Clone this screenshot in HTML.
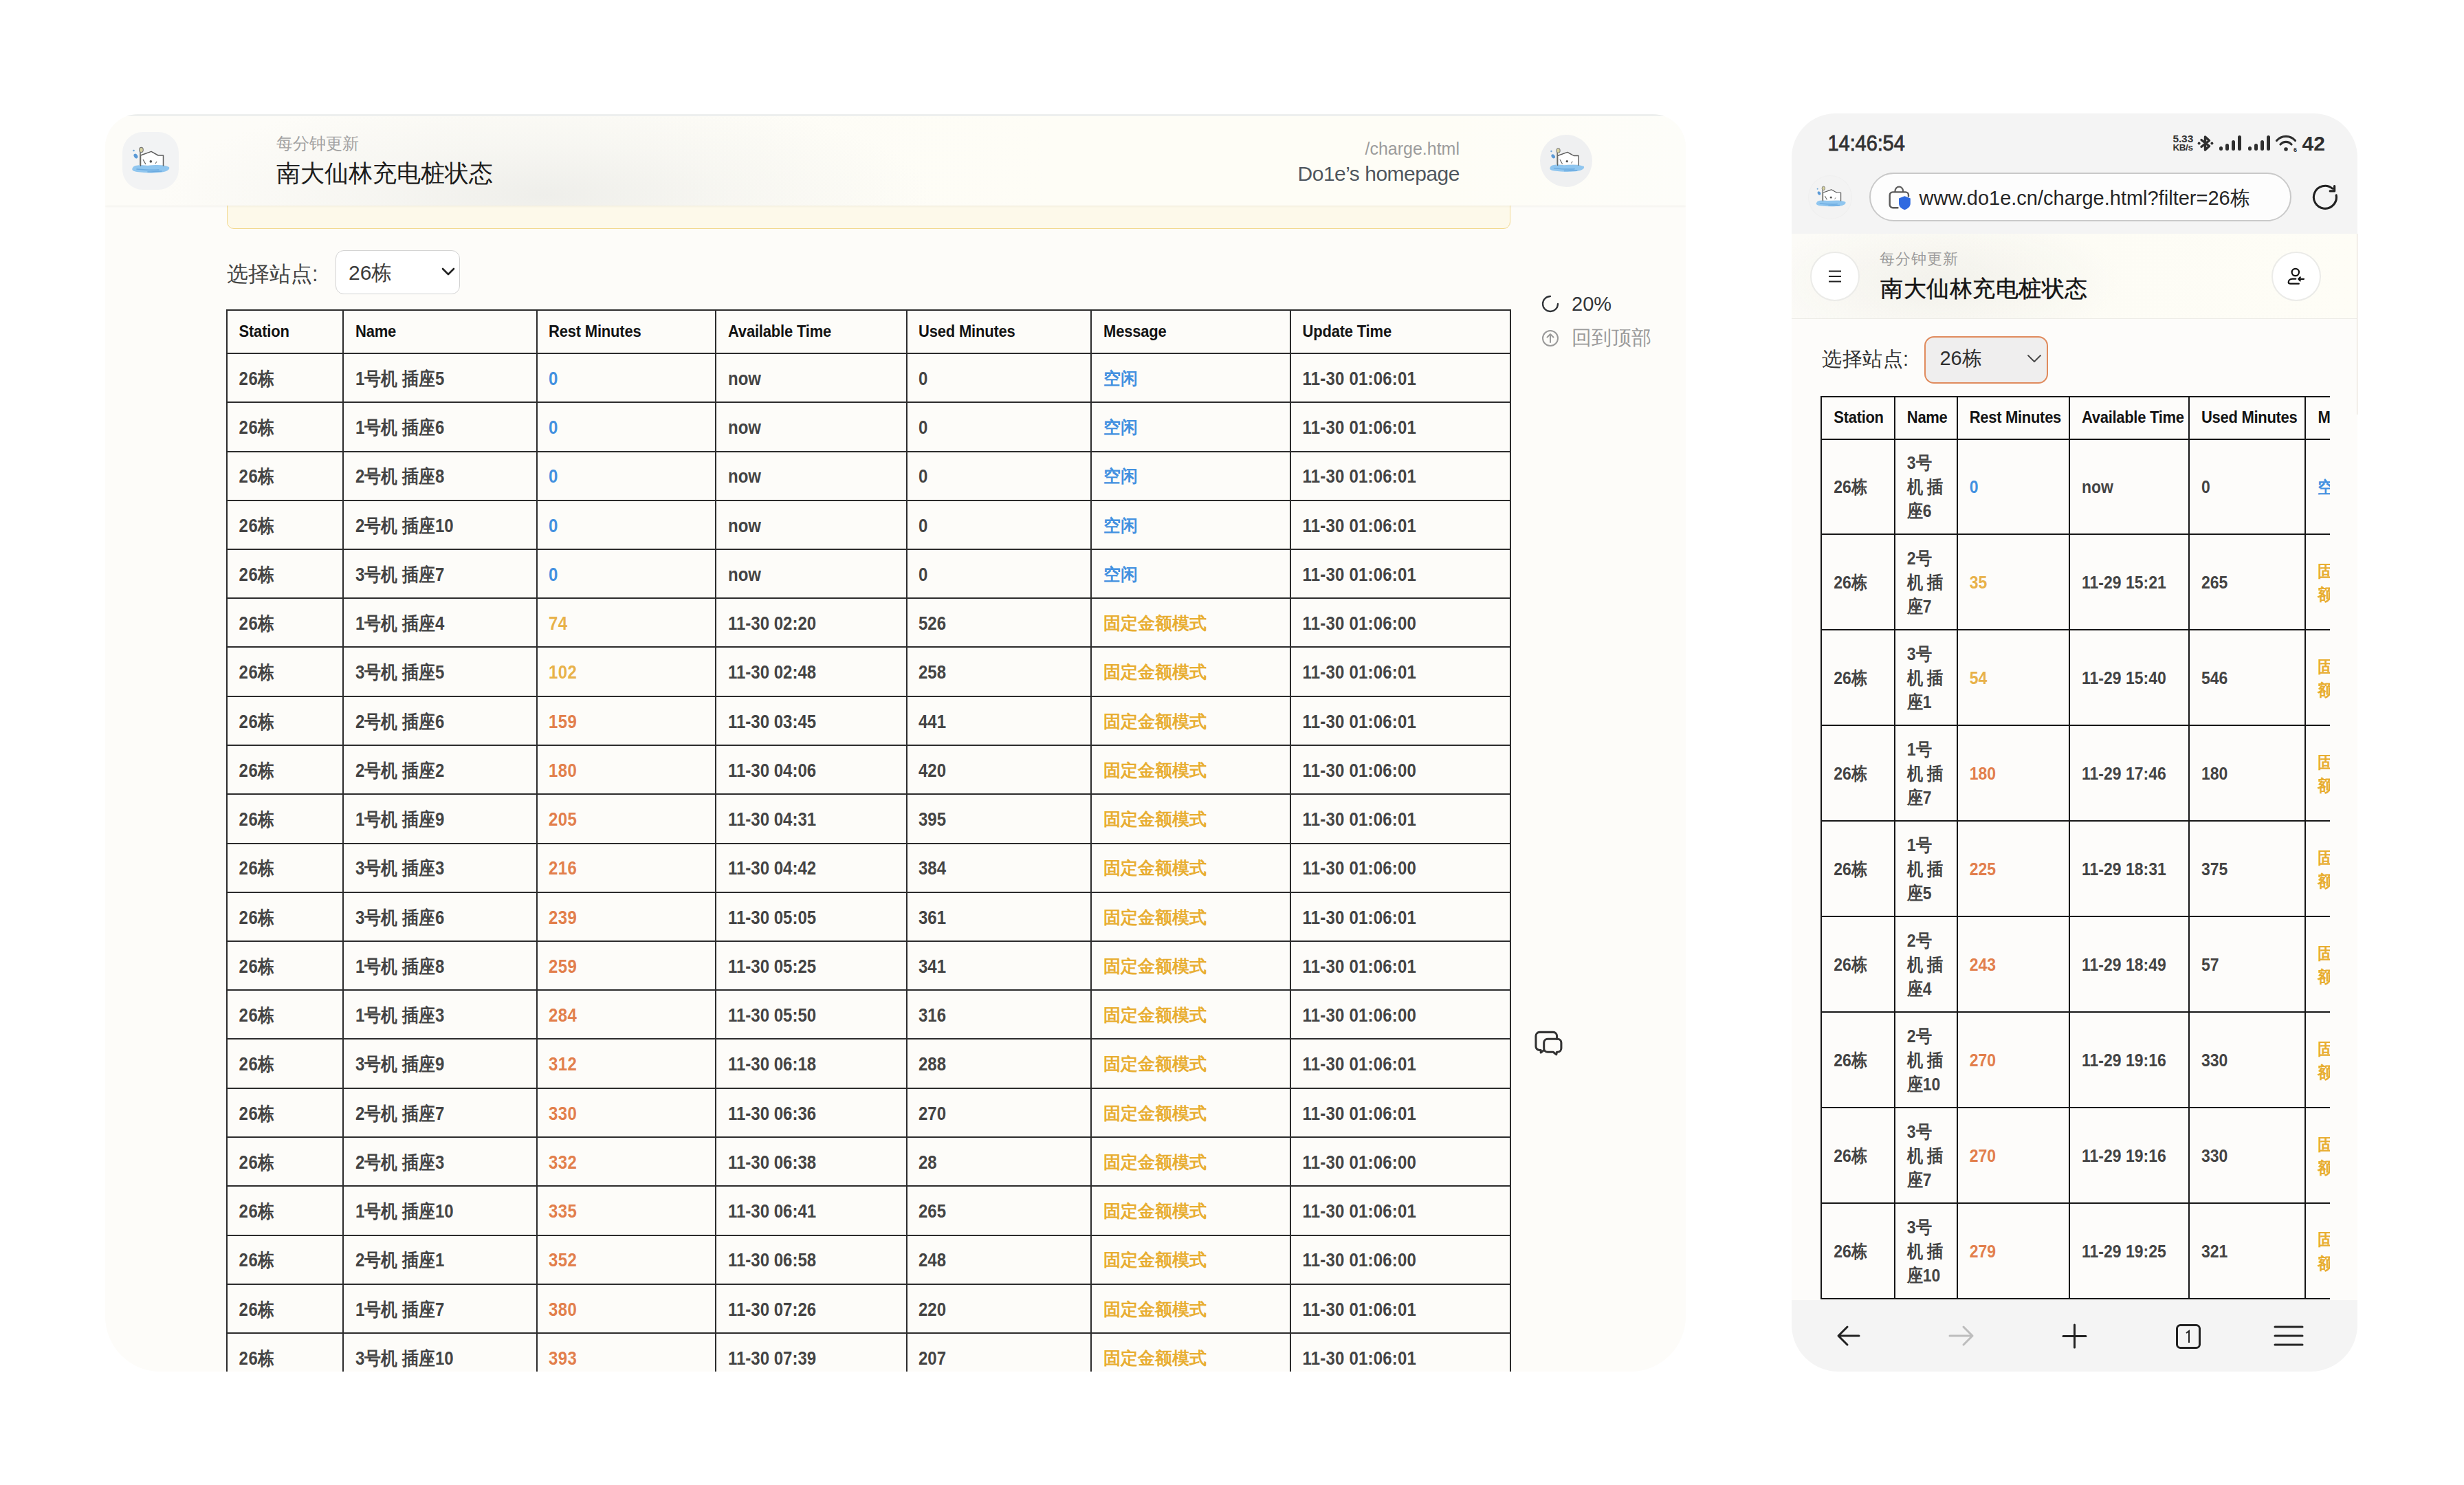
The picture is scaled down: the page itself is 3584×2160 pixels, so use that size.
<!DOCTYPE html><html><head><meta charset="utf-8"><style>
html,body{margin:0;padding:0;}
body{width:3584px;height:2160px;position:relative;overflow:hidden;background:#ffffff;font-family:"Liberation Sans", sans-serif;}
.t{position:absolute;white-space:nowrap;}
</style></head><body>
<div style="position:absolute;left:153px;top:166px;width:2299px;height:1829px;border-radius:48px 48px 80px 80px;background:#fdfcf9;overflow:hidden;"></div>
<div style="position:absolute;left:330.00px;top:260.00px;width:1867.00px;height:73.00px;box-sizing:border-box;border:1.5px solid #f2d88e;border-radius:10px;background:#fdf9ea;"></div>
<div style="position:absolute;left:153px;top:166px;width:2299px;height:140px;border-radius:48px 48px 0 0;overflow:hidden;">
<div style="position:absolute;left:0;top:0;width:2299px;height:133px;background:radial-gradient(ellipse 560px 150px at 640px 115px, rgba(236,236,232,0.85), rgba(238,238,234,0.4) 50%, rgba(238,238,234,0) 100%), linear-gradient(90deg,#fdfcf8 0%,#fdfcf7 30%,#fefdf6 60%,#fefdf6 85%,#fdfdf9 100%);border-top:3px solid #edefee;box-sizing:border-box;box-shadow:0 1px 3px rgba(120,110,80,0.10);"></div>
</div>
<div style="position:absolute;left:178.00px;top:192.00px;width:82.00px;height:84.00px;border-radius:30px;background:#f2f3f4;"></div>
<svg style="position:absolute;left:178px;top:192px" width="82" height="84" viewBox="0 0 82 84"><g transform="translate(41,40) scale(1.0)"><path d="M-26 12 C-24 7 -12 8 -4 9 C6 8 18 7 27 11 C29 15 22 19 10 19 C0 20 -10 19 -20 18 C-26 17 -28 15 -26 12 Z" fill="#90c6ef"/><path d="M-20 14 C-10 15 0 16 12 15 M-4 18 C4 18 10 17 16 17" fill="none" stroke="#6aaae0" stroke-width="1.6" stroke-linecap="round"/><path d="M-14.5 8 L-14.5 -6 L1 -11.6 L11 -6 L18.5 -6 L18.5 8 Z" fill="#ffffff"/><path d="M-14.5 9 L-14.5 -6 L1 -11.6 L11 -6 L18.5 -6 L18.5 9" fill="none" stroke="#5b5b5b" stroke-width="1.5" stroke-linejoin="round" stroke-linecap="round"/><path d="M-11 0 L-7 7" stroke="#666" stroke-width="1.3"/><circle cx="0.3" cy="2.9" r="1.8" fill="#555"/><path d="M7 6 L9 3" stroke="#777" stroke-width="1.2"/><path d="M-15 8 L-15 -12" stroke="#6d6d66" stroke-width="1.7"/><ellipse cx="-13.5" cy="-14" rx="2.8" ry="3.6" fill="#d8d3a0" stroke="#777" stroke-width="1.1"/><ellipse cx="-21.5" cy="-5" rx="2.6" ry="3.6" transform="rotate(-35 -21.5 -5)" fill="#5c9ad6"/><circle cx="-24.5" cy="-13" r="1.3" fill="#6fa7d8"/></g></svg>
<div class="t" style="left:402.00px;top:196.68px;font-size:24px;line-height:24px;color:#a3a3a3;font-weight:400;">每分钟更新</div>
<div class="t" style="left:402.00px;top:234.37px;font-size:35px;line-height:35px;color:#1c1c1c;font-weight:400;">南大仙林充电桩状态</div>
<div class="t" style="right:1461.00px;top:203.84px;font-size:25px;line-height:25px;color:#9c9c9c;font-weight:400;">/charge.html</div>
<div class="t" style="right:1461.00px;top:238.30px;font-size:30px;line-height:30px;color:#50575e;font-weight:400;letter-spacing:-0.5px;">Do1e’s homepage</div>
<div style="position:absolute;left:2240px;top:196px;width:76px;height:76px;border-radius:50%;background:#eff0f1;"></div>
<svg style="position:absolute;left:2240px;top:196px" width="76" height="76" viewBox="0 0 76 76"><g transform="translate(39,36) scale(0.92)"><path d="M-26 12 C-24 7 -12 8 -4 9 C6 8 18 7 27 11 C29 15 22 19 10 19 C0 20 -10 19 -20 18 C-26 17 -28 15 -26 12 Z" fill="#90c6ef"/><path d="M-20 14 C-10 15 0 16 12 15 M-4 18 C4 18 10 17 16 17" fill="none" stroke="#6aaae0" stroke-width="1.6" stroke-linecap="round"/><path d="M-14.5 8 L-14.5 -6 L1 -11.6 L11 -6 L18.5 -6 L18.5 8 Z" fill="#ffffff"/><path d="M-14.5 9 L-14.5 -6 L1 -11.6 L11 -6 L18.5 -6 L18.5 9" fill="none" stroke="#5b5b5b" stroke-width="1.5" stroke-linejoin="round" stroke-linecap="round"/><path d="M-11 0 L-7 7" stroke="#666" stroke-width="1.3"/><circle cx="0.3" cy="2.9" r="1.8" fill="#555"/><path d="M7 6 L9 3" stroke="#777" stroke-width="1.2"/><path d="M-15 8 L-15 -12" stroke="#6d6d66" stroke-width="1.7"/><ellipse cx="-13.5" cy="-14" rx="2.8" ry="3.6" fill="#d8d3a0" stroke="#777" stroke-width="1.1"/><ellipse cx="-21.5" cy="-5" rx="2.6" ry="3.6" transform="rotate(-35 -21.5 -5)" fill="#5c9ad6"/><circle cx="-24.5" cy="-13" r="1.3" fill="#6fa7d8"/></g></svg>
<div class="t" style="left:330.00px;top:382.76px;font-size:31px;line-height:31px;color:#444;font-weight:400;">选择站点:</div>
<div style="position:absolute;left:488.00px;top:364.00px;width:181.00px;height:64.00px;box-sizing:border-box;border:1.5px solid #d2d2d2;border-radius:12px;background:#ffffff;"></div>
<div class="t" style="left:507.00px;top:381.61px;font-size:30px;line-height:30px;color:#3c3c3c;font-weight:400;">26栋</div>
<svg style="position:absolute;left:640px;top:385px" width="24" height="20" viewBox="0 0 24 20"><path d="M4 6 L12 14 L20 6" fill="none" stroke="#222" stroke-width="2.6" stroke-linecap="round" stroke-linejoin="round"/></svg>
<svg style="position:absolute;left:2241px;top:428px" width="28" height="28" viewBox="0 0 28 28"><path d="M14 3 A11 11 0 1 0 25 14" fill="none" stroke="#2f3236" stroke-width="2.3" stroke-linecap="round"/></svg>
<div class="t" style="left:2286.00px;top:427.65px;font-size:29px;line-height:29px;color:#33363a;font-weight:400;">20%</div>
<svg style="position:absolute;left:2241px;top:478px" width="28" height="28" viewBox="0 0 28 28"><circle cx="14" cy="14" r="11" fill="none" stroke="#9a9a9a" stroke-width="2"/><path d="M14 20 V8 M9.5 12.5 L14 8 L18.5 12.5" fill="none" stroke="#9a9a9a" stroke-width="2" stroke-linecap="round" stroke-linejoin="round"/></svg>
<div class="t" style="left:2286.00px;top:477.45px;font-size:29px;line-height:29px;color:#9b9b9b;font-weight:400;">回到顶部</div>
<svg style="position:absolute;left:2229px;top:1497px" width="46" height="40" viewBox="0 0 46 40"><g transform="translate(3.2,2.6) scale(0.9)"><path d="M8 2 H30 A6 6 0 0 1 36 8 V13 M15 31 L10 35 L10 31 H8 A6 6 0 0 1 2 25 V8 A6 6 0 0 1 8 2" fill="none" stroke="#333" stroke-width="3.4" stroke-linejoin="round" stroke-linecap="round"/><path d="M21 13 H37 A6 6 0 0 1 43 19 V28 A6 6 0 0 1 37 34 H36 L35 38 L30 34 H21 A6 6 0 0 1 15 28 V19 A6 6 0 0 1 21 13 Z" fill="none" stroke="#333" stroke-width="3.4" stroke-linejoin="round"/></g></svg>
<div style="position:absolute;left:0;top:0;width:3584px;height:1995px;overflow:hidden;">
<div style="position:absolute;left:329.00px;top:450.00px;width:2.00px;height:1546.50px;background:#2c2c2c;"></div>
<div style="position:absolute;left:498.00px;top:450.00px;width:2.00px;height:1546.50px;background:#2c2c2c;"></div>
<div style="position:absolute;left:780.00px;top:450.00px;width:2.00px;height:1546.50px;background:#2c2c2c;"></div>
<div style="position:absolute;left:1040.00px;top:450.00px;width:2.00px;height:1546.50px;background:#2c2c2c;"></div>
<div style="position:absolute;left:1318.00px;top:450.00px;width:2.00px;height:1546.50px;background:#2c2c2c;"></div>
<div style="position:absolute;left:1586.00px;top:450.00px;width:2.00px;height:1546.50px;background:#2c2c2c;"></div>
<div style="position:absolute;left:1876.00px;top:450.00px;width:2.00px;height:1546.50px;background:#2c2c2c;"></div>
<div style="position:absolute;left:2196.00px;top:450.00px;width:2.00px;height:1546.50px;background:#2c2c2c;"></div>
<div style="position:absolute;left:329.00px;top:450.00px;width:1868.00px;height:2.00px;background:#2c2c2c;"></div>
<div style="position:absolute;left:329.00px;top:513.00px;width:1868.00px;height:2.00px;background:#2c2c2c;"></div>
<div style="position:absolute;left:329.00px;top:584.00px;width:1868.00px;height:2.00px;background:#2c2c2c;"></div>
<div style="position:absolute;left:329.00px;top:656.00px;width:1868.00px;height:2.00px;background:#2c2c2c;"></div>
<div style="position:absolute;left:329.00px;top:727.00px;width:1868.00px;height:2.00px;background:#2c2c2c;"></div>
<div style="position:absolute;left:329.00px;top:798.00px;width:1868.00px;height:2.00px;background:#2c2c2c;"></div>
<div style="position:absolute;left:329.00px;top:869.00px;width:1868.00px;height:2.00px;background:#2c2c2c;"></div>
<div style="position:absolute;left:329.00px;top:940.00px;width:1868.00px;height:2.00px;background:#2c2c2c;"></div>
<div style="position:absolute;left:329.00px;top:1012.00px;width:1868.00px;height:2.00px;background:#2c2c2c;"></div>
<div style="position:absolute;left:329.00px;top:1083.00px;width:1868.00px;height:2.00px;background:#2c2c2c;"></div>
<div style="position:absolute;left:329.00px;top:1154.00px;width:1868.00px;height:2.00px;background:#2c2c2c;"></div>
<div style="position:absolute;left:329.00px;top:1226.00px;width:1868.00px;height:2.00px;background:#2c2c2c;"></div>
<div style="position:absolute;left:329.00px;top:1297.00px;width:1868.00px;height:2.00px;background:#2c2c2c;"></div>
<div style="position:absolute;left:329.00px;top:1368.00px;width:1868.00px;height:2.00px;background:#2c2c2c;"></div>
<div style="position:absolute;left:329.00px;top:1439.00px;width:1868.00px;height:2.00px;background:#2c2c2c;"></div>
<div style="position:absolute;left:329.00px;top:1510.00px;width:1868.00px;height:2.00px;background:#2c2c2c;"></div>
<div style="position:absolute;left:329.00px;top:1582.00px;width:1868.00px;height:2.00px;background:#2c2c2c;"></div>
<div style="position:absolute;left:329.00px;top:1653.00px;width:1868.00px;height:2.00px;background:#2c2c2c;"></div>
<div style="position:absolute;left:329.00px;top:1724.00px;width:1868.00px;height:2.00px;background:#2c2c2c;"></div>
<div style="position:absolute;left:329.00px;top:1796.00px;width:1868.00px;height:2.00px;background:#2c2c2c;"></div>
<div style="position:absolute;left:329.00px;top:1867.00px;width:1868.00px;height:2.00px;background:#2c2c2c;"></div>
<div style="position:absolute;left:329.00px;top:1938.00px;width:1868.00px;height:2.00px;background:#2c2c2c;"></div>
<div style="position:absolute;left:329.00px;top:2009.00px;width:1868.00px;height:2.00px;background:#2c2c2c;"></div>
<div class="t" style="left:347.50px;top:471.58px;font-size:22px;line-height:22px;color:#141414;font-weight:700;letter-spacing:-0.2px;transform:scaleY(1.09);transform-origin:0 18.62px;">Station</div>
<div class="t" style="left:517.00px;top:471.58px;font-size:22px;line-height:22px;color:#141414;font-weight:700;letter-spacing:-0.2px;transform:scaleY(1.09);transform-origin:0 18.62px;">Name</div>
<div class="t" style="left:798.00px;top:471.58px;font-size:22px;line-height:22px;color:#141414;font-weight:700;letter-spacing:-0.2px;transform:scaleY(1.09);transform-origin:0 18.62px;">Rest Minutes</div>
<div class="t" style="left:1059.00px;top:471.58px;font-size:22px;line-height:22px;color:#141414;font-weight:700;letter-spacing:-0.2px;transform:scaleY(1.09);transform-origin:0 18.62px;">Available Time</div>
<div class="t" style="left:1336.00px;top:471.58px;font-size:22px;line-height:22px;color:#141414;font-weight:700;letter-spacing:-0.2px;transform:scaleY(1.09);transform-origin:0 18.62px;">Used Minutes</div>
<div class="t" style="left:1605.00px;top:471.58px;font-size:22px;line-height:22px;color:#141414;font-weight:700;letter-spacing:-0.2px;transform:scaleY(1.09);transform-origin:0 18.62px;">Message</div>
<div class="t" style="left:1894.50px;top:471.58px;font-size:22px;line-height:22px;color:#141414;font-weight:700;letter-spacing:-0.2px;transform:scaleY(1.09);transform-origin:0 18.62px;">Update Time</div>
<div class="t" style="left:347.50px;top:539.88px;font-size:24px;line-height:24px;color:#444444;font-weight:700;letter-spacing:0.6px;transform:scaleY(1.13);transform-origin:0 20.32px;">26栋</div>
<div class="t" style="left:517.00px;top:539.88px;font-size:24px;line-height:24px;color:#444444;font-weight:700;transform:scaleY(1.13);transform-origin:0 20.32px;">1号机 插座5</div>
<div class="t" style="left:798.00px;top:539.88px;font-size:24px;line-height:24px;color:#4391e0;font-weight:700;letter-spacing:0.4px;transform:scaleY(1.13);transform-origin:0 20.32px;">0</div>
<div class="t" style="left:1059.00px;top:539.88px;font-size:24px;line-height:24px;color:#444444;font-weight:700;transform:scaleY(1.13);transform-origin:0 20.32px;">now</div>
<div class="t" style="left:1336.00px;top:539.88px;font-size:24px;line-height:24px;color:#444444;font-weight:700;transform:scaleY(1.13);transform-origin:0 20.32px;">0</div>
<div class="t" style="left:1605.00px;top:537.84px;font-size:25px;line-height:25px;color:#4391e0;font-weight:700;">空闲</div>
<div class="t" style="left:1894.50px;top:539.88px;font-size:24px;line-height:24px;color:#444444;font-weight:700;letter-spacing:0.2px;transform:scaleY(1.13);transform-origin:0 20.32px;">11-30 01:06:01</div>
<div class="t" style="left:347.50px;top:611.13px;font-size:24px;line-height:24px;color:#444444;font-weight:700;letter-spacing:0.6px;transform:scaleY(1.13);transform-origin:0 20.32px;">26栋</div>
<div class="t" style="left:517.00px;top:611.13px;font-size:24px;line-height:24px;color:#444444;font-weight:700;transform:scaleY(1.13);transform-origin:0 20.32px;">1号机 插座6</div>
<div class="t" style="left:798.00px;top:611.13px;font-size:24px;line-height:24px;color:#4391e0;font-weight:700;letter-spacing:0.4px;transform:scaleY(1.13);transform-origin:0 20.32px;">0</div>
<div class="t" style="left:1059.00px;top:611.13px;font-size:24px;line-height:24px;color:#444444;font-weight:700;transform:scaleY(1.13);transform-origin:0 20.32px;">now</div>
<div class="t" style="left:1336.00px;top:611.13px;font-size:24px;line-height:24px;color:#444444;font-weight:700;transform:scaleY(1.13);transform-origin:0 20.32px;">0</div>
<div class="t" style="left:1605.00px;top:609.09px;font-size:25px;line-height:25px;color:#4391e0;font-weight:700;">空闲</div>
<div class="t" style="left:1894.50px;top:611.13px;font-size:24px;line-height:24px;color:#444444;font-weight:700;letter-spacing:0.2px;transform:scaleY(1.13);transform-origin:0 20.32px;">11-30 01:06:01</div>
<div class="t" style="left:347.50px;top:682.38px;font-size:24px;line-height:24px;color:#444444;font-weight:700;letter-spacing:0.6px;transform:scaleY(1.13);transform-origin:0 20.32px;">26栋</div>
<div class="t" style="left:517.00px;top:682.38px;font-size:24px;line-height:24px;color:#444444;font-weight:700;transform:scaleY(1.13);transform-origin:0 20.32px;">2号机 插座8</div>
<div class="t" style="left:798.00px;top:682.38px;font-size:24px;line-height:24px;color:#4391e0;font-weight:700;letter-spacing:0.4px;transform:scaleY(1.13);transform-origin:0 20.32px;">0</div>
<div class="t" style="left:1059.00px;top:682.38px;font-size:24px;line-height:24px;color:#444444;font-weight:700;transform:scaleY(1.13);transform-origin:0 20.32px;">now</div>
<div class="t" style="left:1336.00px;top:682.38px;font-size:24px;line-height:24px;color:#444444;font-weight:700;transform:scaleY(1.13);transform-origin:0 20.32px;">0</div>
<div class="t" style="left:1605.00px;top:680.34px;font-size:25px;line-height:25px;color:#4391e0;font-weight:700;">空闲</div>
<div class="t" style="left:1894.50px;top:682.38px;font-size:24px;line-height:24px;color:#444444;font-weight:700;letter-spacing:0.2px;transform:scaleY(1.13);transform-origin:0 20.32px;">11-30 01:06:01</div>
<div class="t" style="left:347.50px;top:753.63px;font-size:24px;line-height:24px;color:#444444;font-weight:700;letter-spacing:0.6px;transform:scaleY(1.13);transform-origin:0 20.32px;">26栋</div>
<div class="t" style="left:517.00px;top:753.63px;font-size:24px;line-height:24px;color:#444444;font-weight:700;transform:scaleY(1.13);transform-origin:0 20.32px;">2号机 插座10</div>
<div class="t" style="left:798.00px;top:753.63px;font-size:24px;line-height:24px;color:#4391e0;font-weight:700;letter-spacing:0.4px;transform:scaleY(1.13);transform-origin:0 20.32px;">0</div>
<div class="t" style="left:1059.00px;top:753.63px;font-size:24px;line-height:24px;color:#444444;font-weight:700;transform:scaleY(1.13);transform-origin:0 20.32px;">now</div>
<div class="t" style="left:1336.00px;top:753.63px;font-size:24px;line-height:24px;color:#444444;font-weight:700;transform:scaleY(1.13);transform-origin:0 20.32px;">0</div>
<div class="t" style="left:1605.00px;top:751.59px;font-size:25px;line-height:25px;color:#4391e0;font-weight:700;">空闲</div>
<div class="t" style="left:1894.50px;top:753.63px;font-size:24px;line-height:24px;color:#444444;font-weight:700;letter-spacing:0.2px;transform:scaleY(1.13);transform-origin:0 20.32px;">11-30 01:06:01</div>
<div class="t" style="left:347.50px;top:824.88px;font-size:24px;line-height:24px;color:#444444;font-weight:700;letter-spacing:0.6px;transform:scaleY(1.13);transform-origin:0 20.32px;">26栋</div>
<div class="t" style="left:517.00px;top:824.88px;font-size:24px;line-height:24px;color:#444444;font-weight:700;transform:scaleY(1.13);transform-origin:0 20.32px;">3号机 插座7</div>
<div class="t" style="left:798.00px;top:824.88px;font-size:24px;line-height:24px;color:#4391e0;font-weight:700;letter-spacing:0.4px;transform:scaleY(1.13);transform-origin:0 20.32px;">0</div>
<div class="t" style="left:1059.00px;top:824.88px;font-size:24px;line-height:24px;color:#444444;font-weight:700;transform:scaleY(1.13);transform-origin:0 20.32px;">now</div>
<div class="t" style="left:1336.00px;top:824.88px;font-size:24px;line-height:24px;color:#444444;font-weight:700;transform:scaleY(1.13);transform-origin:0 20.32px;">0</div>
<div class="t" style="left:1605.00px;top:822.84px;font-size:25px;line-height:25px;color:#4391e0;font-weight:700;">空闲</div>
<div class="t" style="left:1894.50px;top:824.88px;font-size:24px;line-height:24px;color:#444444;font-weight:700;letter-spacing:0.2px;transform:scaleY(1.13);transform-origin:0 20.32px;">11-30 01:06:01</div>
<div class="t" style="left:347.50px;top:896.13px;font-size:24px;line-height:24px;color:#444444;font-weight:700;letter-spacing:0.6px;transform:scaleY(1.13);transform-origin:0 20.32px;">26栋</div>
<div class="t" style="left:517.00px;top:896.13px;font-size:24px;line-height:24px;color:#444444;font-weight:700;transform:scaleY(1.13);transform-origin:0 20.32px;">1号机 插座4</div>
<div class="t" style="left:798.00px;top:896.13px;font-size:24px;line-height:24px;color:#e8b24a;font-weight:700;letter-spacing:0.4px;transform:scaleY(1.13);transform-origin:0 20.32px;">74</div>
<div class="t" style="left:1059.00px;top:896.13px;font-size:24px;line-height:24px;color:#444444;font-weight:700;transform:scaleY(1.13);transform-origin:0 20.32px;">11-30 02:20</div>
<div class="t" style="left:1336.00px;top:896.13px;font-size:24px;line-height:24px;color:#444444;font-weight:700;transform:scaleY(1.13);transform-origin:0 20.32px;">526</div>
<div class="t" style="left:1605.00px;top:894.09px;font-size:25px;line-height:25px;color:#e8ae32;font-weight:700;">固定金额模式</div>
<div class="t" style="left:1894.50px;top:896.13px;font-size:24px;line-height:24px;color:#444444;font-weight:700;letter-spacing:0.2px;transform:scaleY(1.13);transform-origin:0 20.32px;">11-30 01:06:00</div>
<div class="t" style="left:347.50px;top:967.38px;font-size:24px;line-height:24px;color:#444444;font-weight:700;letter-spacing:0.6px;transform:scaleY(1.13);transform-origin:0 20.32px;">26栋</div>
<div class="t" style="left:517.00px;top:967.38px;font-size:24px;line-height:24px;color:#444444;font-weight:700;transform:scaleY(1.13);transform-origin:0 20.32px;">3号机 插座5</div>
<div class="t" style="left:798.00px;top:967.38px;font-size:24px;line-height:24px;color:#e8b24a;font-weight:700;letter-spacing:0.4px;transform:scaleY(1.13);transform-origin:0 20.32px;">102</div>
<div class="t" style="left:1059.00px;top:967.38px;font-size:24px;line-height:24px;color:#444444;font-weight:700;transform:scaleY(1.13);transform-origin:0 20.32px;">11-30 02:48</div>
<div class="t" style="left:1336.00px;top:967.38px;font-size:24px;line-height:24px;color:#444444;font-weight:700;transform:scaleY(1.13);transform-origin:0 20.32px;">258</div>
<div class="t" style="left:1605.00px;top:965.34px;font-size:25px;line-height:25px;color:#e8ae32;font-weight:700;">固定金额模式</div>
<div class="t" style="left:1894.50px;top:967.38px;font-size:24px;line-height:24px;color:#444444;font-weight:700;letter-spacing:0.2px;transform:scaleY(1.13);transform-origin:0 20.32px;">11-30 01:06:01</div>
<div class="t" style="left:347.50px;top:1038.63px;font-size:24px;line-height:24px;color:#444444;font-weight:700;letter-spacing:0.6px;transform:scaleY(1.13);transform-origin:0 20.32px;">26栋</div>
<div class="t" style="left:517.00px;top:1038.63px;font-size:24px;line-height:24px;color:#444444;font-weight:700;transform:scaleY(1.13);transform-origin:0 20.32px;">2号机 插座6</div>
<div class="t" style="left:798.00px;top:1038.63px;font-size:24px;line-height:24px;color:#e27f4c;font-weight:700;letter-spacing:0.4px;transform:scaleY(1.13);transform-origin:0 20.32px;">159</div>
<div class="t" style="left:1059.00px;top:1038.63px;font-size:24px;line-height:24px;color:#444444;font-weight:700;transform:scaleY(1.13);transform-origin:0 20.32px;">11-30 03:45</div>
<div class="t" style="left:1336.00px;top:1038.63px;font-size:24px;line-height:24px;color:#444444;font-weight:700;transform:scaleY(1.13);transform-origin:0 20.32px;">441</div>
<div class="t" style="left:1605.00px;top:1036.59px;font-size:25px;line-height:25px;color:#e8ae32;font-weight:700;">固定金额模式</div>
<div class="t" style="left:1894.50px;top:1038.63px;font-size:24px;line-height:24px;color:#444444;font-weight:700;letter-spacing:0.2px;transform:scaleY(1.13);transform-origin:0 20.32px;">11-30 01:06:01</div>
<div class="t" style="left:347.50px;top:1109.88px;font-size:24px;line-height:24px;color:#444444;font-weight:700;letter-spacing:0.6px;transform:scaleY(1.13);transform-origin:0 20.32px;">26栋</div>
<div class="t" style="left:517.00px;top:1109.88px;font-size:24px;line-height:24px;color:#444444;font-weight:700;transform:scaleY(1.13);transform-origin:0 20.32px;">2号机 插座2</div>
<div class="t" style="left:798.00px;top:1109.88px;font-size:24px;line-height:24px;color:#e27f4c;font-weight:700;letter-spacing:0.4px;transform:scaleY(1.13);transform-origin:0 20.32px;">180</div>
<div class="t" style="left:1059.00px;top:1109.88px;font-size:24px;line-height:24px;color:#444444;font-weight:700;transform:scaleY(1.13);transform-origin:0 20.32px;">11-30 04:06</div>
<div class="t" style="left:1336.00px;top:1109.88px;font-size:24px;line-height:24px;color:#444444;font-weight:700;transform:scaleY(1.13);transform-origin:0 20.32px;">420</div>
<div class="t" style="left:1605.00px;top:1107.84px;font-size:25px;line-height:25px;color:#e8ae32;font-weight:700;">固定金额模式</div>
<div class="t" style="left:1894.50px;top:1109.88px;font-size:24px;line-height:24px;color:#444444;font-weight:700;letter-spacing:0.2px;transform:scaleY(1.13);transform-origin:0 20.32px;">11-30 01:06:00</div>
<div class="t" style="left:347.50px;top:1181.13px;font-size:24px;line-height:24px;color:#444444;font-weight:700;letter-spacing:0.6px;transform:scaleY(1.13);transform-origin:0 20.32px;">26栋</div>
<div class="t" style="left:517.00px;top:1181.13px;font-size:24px;line-height:24px;color:#444444;font-weight:700;transform:scaleY(1.13);transform-origin:0 20.32px;">1号机 插座9</div>
<div class="t" style="left:798.00px;top:1181.13px;font-size:24px;line-height:24px;color:#e27f4c;font-weight:700;letter-spacing:0.4px;transform:scaleY(1.13);transform-origin:0 20.32px;">205</div>
<div class="t" style="left:1059.00px;top:1181.13px;font-size:24px;line-height:24px;color:#444444;font-weight:700;transform:scaleY(1.13);transform-origin:0 20.32px;">11-30 04:31</div>
<div class="t" style="left:1336.00px;top:1181.13px;font-size:24px;line-height:24px;color:#444444;font-weight:700;transform:scaleY(1.13);transform-origin:0 20.32px;">395</div>
<div class="t" style="left:1605.00px;top:1179.09px;font-size:25px;line-height:25px;color:#e8ae32;font-weight:700;">固定金额模式</div>
<div class="t" style="left:1894.50px;top:1181.13px;font-size:24px;line-height:24px;color:#444444;font-weight:700;letter-spacing:0.2px;transform:scaleY(1.13);transform-origin:0 20.32px;">11-30 01:06:01</div>
<div class="t" style="left:347.50px;top:1252.38px;font-size:24px;line-height:24px;color:#444444;font-weight:700;letter-spacing:0.6px;transform:scaleY(1.13);transform-origin:0 20.32px;">26栋</div>
<div class="t" style="left:517.00px;top:1252.38px;font-size:24px;line-height:24px;color:#444444;font-weight:700;transform:scaleY(1.13);transform-origin:0 20.32px;">3号机 插座3</div>
<div class="t" style="left:798.00px;top:1252.38px;font-size:24px;line-height:24px;color:#e27f4c;font-weight:700;letter-spacing:0.4px;transform:scaleY(1.13);transform-origin:0 20.32px;">216</div>
<div class="t" style="left:1059.00px;top:1252.38px;font-size:24px;line-height:24px;color:#444444;font-weight:700;transform:scaleY(1.13);transform-origin:0 20.32px;">11-30 04:42</div>
<div class="t" style="left:1336.00px;top:1252.38px;font-size:24px;line-height:24px;color:#444444;font-weight:700;transform:scaleY(1.13);transform-origin:0 20.32px;">384</div>
<div class="t" style="left:1605.00px;top:1250.34px;font-size:25px;line-height:25px;color:#e8ae32;font-weight:700;">固定金额模式</div>
<div class="t" style="left:1894.50px;top:1252.38px;font-size:24px;line-height:24px;color:#444444;font-weight:700;letter-spacing:0.2px;transform:scaleY(1.13);transform-origin:0 20.32px;">11-30 01:06:00</div>
<div class="t" style="left:347.50px;top:1323.63px;font-size:24px;line-height:24px;color:#444444;font-weight:700;letter-spacing:0.6px;transform:scaleY(1.13);transform-origin:0 20.32px;">26栋</div>
<div class="t" style="left:517.00px;top:1323.63px;font-size:24px;line-height:24px;color:#444444;font-weight:700;transform:scaleY(1.13);transform-origin:0 20.32px;">3号机 插座6</div>
<div class="t" style="left:798.00px;top:1323.63px;font-size:24px;line-height:24px;color:#e27f4c;font-weight:700;letter-spacing:0.4px;transform:scaleY(1.13);transform-origin:0 20.32px;">239</div>
<div class="t" style="left:1059.00px;top:1323.63px;font-size:24px;line-height:24px;color:#444444;font-weight:700;transform:scaleY(1.13);transform-origin:0 20.32px;">11-30 05:05</div>
<div class="t" style="left:1336.00px;top:1323.63px;font-size:24px;line-height:24px;color:#444444;font-weight:700;transform:scaleY(1.13);transform-origin:0 20.32px;">361</div>
<div class="t" style="left:1605.00px;top:1321.59px;font-size:25px;line-height:25px;color:#e8ae32;font-weight:700;">固定金额模式</div>
<div class="t" style="left:1894.50px;top:1323.63px;font-size:24px;line-height:24px;color:#444444;font-weight:700;letter-spacing:0.2px;transform:scaleY(1.13);transform-origin:0 20.32px;">11-30 01:06:01</div>
<div class="t" style="left:347.50px;top:1394.88px;font-size:24px;line-height:24px;color:#444444;font-weight:700;letter-spacing:0.6px;transform:scaleY(1.13);transform-origin:0 20.32px;">26栋</div>
<div class="t" style="left:517.00px;top:1394.88px;font-size:24px;line-height:24px;color:#444444;font-weight:700;transform:scaleY(1.13);transform-origin:0 20.32px;">1号机 插座8</div>
<div class="t" style="left:798.00px;top:1394.88px;font-size:24px;line-height:24px;color:#e27f4c;font-weight:700;letter-spacing:0.4px;transform:scaleY(1.13);transform-origin:0 20.32px;">259</div>
<div class="t" style="left:1059.00px;top:1394.88px;font-size:24px;line-height:24px;color:#444444;font-weight:700;transform:scaleY(1.13);transform-origin:0 20.32px;">11-30 05:25</div>
<div class="t" style="left:1336.00px;top:1394.88px;font-size:24px;line-height:24px;color:#444444;font-weight:700;transform:scaleY(1.13);transform-origin:0 20.32px;">341</div>
<div class="t" style="left:1605.00px;top:1392.84px;font-size:25px;line-height:25px;color:#e8ae32;font-weight:700;">固定金额模式</div>
<div class="t" style="left:1894.50px;top:1394.88px;font-size:24px;line-height:24px;color:#444444;font-weight:700;letter-spacing:0.2px;transform:scaleY(1.13);transform-origin:0 20.32px;">11-30 01:06:01</div>
<div class="t" style="left:347.50px;top:1466.13px;font-size:24px;line-height:24px;color:#444444;font-weight:700;letter-spacing:0.6px;transform:scaleY(1.13);transform-origin:0 20.32px;">26栋</div>
<div class="t" style="left:517.00px;top:1466.13px;font-size:24px;line-height:24px;color:#444444;font-weight:700;transform:scaleY(1.13);transform-origin:0 20.32px;">1号机 插座3</div>
<div class="t" style="left:798.00px;top:1466.13px;font-size:24px;line-height:24px;color:#e27f4c;font-weight:700;letter-spacing:0.4px;transform:scaleY(1.13);transform-origin:0 20.32px;">284</div>
<div class="t" style="left:1059.00px;top:1466.13px;font-size:24px;line-height:24px;color:#444444;font-weight:700;transform:scaleY(1.13);transform-origin:0 20.32px;">11-30 05:50</div>
<div class="t" style="left:1336.00px;top:1466.13px;font-size:24px;line-height:24px;color:#444444;font-weight:700;transform:scaleY(1.13);transform-origin:0 20.32px;">316</div>
<div class="t" style="left:1605.00px;top:1464.09px;font-size:25px;line-height:25px;color:#e8ae32;font-weight:700;">固定金额模式</div>
<div class="t" style="left:1894.50px;top:1466.13px;font-size:24px;line-height:24px;color:#444444;font-weight:700;letter-spacing:0.2px;transform:scaleY(1.13);transform-origin:0 20.32px;">11-30 01:06:00</div>
<div class="t" style="left:347.50px;top:1537.38px;font-size:24px;line-height:24px;color:#444444;font-weight:700;letter-spacing:0.6px;transform:scaleY(1.13);transform-origin:0 20.32px;">26栋</div>
<div class="t" style="left:517.00px;top:1537.38px;font-size:24px;line-height:24px;color:#444444;font-weight:700;transform:scaleY(1.13);transform-origin:0 20.32px;">3号机 插座9</div>
<div class="t" style="left:798.00px;top:1537.38px;font-size:24px;line-height:24px;color:#e27f4c;font-weight:700;letter-spacing:0.4px;transform:scaleY(1.13);transform-origin:0 20.32px;">312</div>
<div class="t" style="left:1059.00px;top:1537.38px;font-size:24px;line-height:24px;color:#444444;font-weight:700;transform:scaleY(1.13);transform-origin:0 20.32px;">11-30 06:18</div>
<div class="t" style="left:1336.00px;top:1537.38px;font-size:24px;line-height:24px;color:#444444;font-weight:700;transform:scaleY(1.13);transform-origin:0 20.32px;">288</div>
<div class="t" style="left:1605.00px;top:1535.34px;font-size:25px;line-height:25px;color:#e8ae32;font-weight:700;">固定金额模式</div>
<div class="t" style="left:1894.50px;top:1537.38px;font-size:24px;line-height:24px;color:#444444;font-weight:700;letter-spacing:0.2px;transform:scaleY(1.13);transform-origin:0 20.32px;">11-30 01:06:01</div>
<div class="t" style="left:347.50px;top:1608.63px;font-size:24px;line-height:24px;color:#444444;font-weight:700;letter-spacing:0.6px;transform:scaleY(1.13);transform-origin:0 20.32px;">26栋</div>
<div class="t" style="left:517.00px;top:1608.63px;font-size:24px;line-height:24px;color:#444444;font-weight:700;transform:scaleY(1.13);transform-origin:0 20.32px;">2号机 插座7</div>
<div class="t" style="left:798.00px;top:1608.63px;font-size:24px;line-height:24px;color:#e27f4c;font-weight:700;letter-spacing:0.4px;transform:scaleY(1.13);transform-origin:0 20.32px;">330</div>
<div class="t" style="left:1059.00px;top:1608.63px;font-size:24px;line-height:24px;color:#444444;font-weight:700;transform:scaleY(1.13);transform-origin:0 20.32px;">11-30 06:36</div>
<div class="t" style="left:1336.00px;top:1608.63px;font-size:24px;line-height:24px;color:#444444;font-weight:700;transform:scaleY(1.13);transform-origin:0 20.32px;">270</div>
<div class="t" style="left:1605.00px;top:1606.59px;font-size:25px;line-height:25px;color:#e8ae32;font-weight:700;">固定金额模式</div>
<div class="t" style="left:1894.50px;top:1608.63px;font-size:24px;line-height:24px;color:#444444;font-weight:700;letter-spacing:0.2px;transform:scaleY(1.13);transform-origin:0 20.32px;">11-30 01:06:01</div>
<div class="t" style="left:347.50px;top:1679.88px;font-size:24px;line-height:24px;color:#444444;font-weight:700;letter-spacing:0.6px;transform:scaleY(1.13);transform-origin:0 20.32px;">26栋</div>
<div class="t" style="left:517.00px;top:1679.88px;font-size:24px;line-height:24px;color:#444444;font-weight:700;transform:scaleY(1.13);transform-origin:0 20.32px;">2号机 插座3</div>
<div class="t" style="left:798.00px;top:1679.88px;font-size:24px;line-height:24px;color:#e27f4c;font-weight:700;letter-spacing:0.4px;transform:scaleY(1.13);transform-origin:0 20.32px;">332</div>
<div class="t" style="left:1059.00px;top:1679.88px;font-size:24px;line-height:24px;color:#444444;font-weight:700;transform:scaleY(1.13);transform-origin:0 20.32px;">11-30 06:38</div>
<div class="t" style="left:1336.00px;top:1679.88px;font-size:24px;line-height:24px;color:#444444;font-weight:700;transform:scaleY(1.13);transform-origin:0 20.32px;">28</div>
<div class="t" style="left:1605.00px;top:1677.84px;font-size:25px;line-height:25px;color:#e8ae32;font-weight:700;">固定金额模式</div>
<div class="t" style="left:1894.50px;top:1679.88px;font-size:24px;line-height:24px;color:#444444;font-weight:700;letter-spacing:0.2px;transform:scaleY(1.13);transform-origin:0 20.32px;">11-30 01:06:00</div>
<div class="t" style="left:347.50px;top:1751.13px;font-size:24px;line-height:24px;color:#444444;font-weight:700;letter-spacing:0.6px;transform:scaleY(1.13);transform-origin:0 20.32px;">26栋</div>
<div class="t" style="left:517.00px;top:1751.13px;font-size:24px;line-height:24px;color:#444444;font-weight:700;transform:scaleY(1.13);transform-origin:0 20.32px;">1号机 插座10</div>
<div class="t" style="left:798.00px;top:1751.13px;font-size:24px;line-height:24px;color:#e27f4c;font-weight:700;letter-spacing:0.4px;transform:scaleY(1.13);transform-origin:0 20.32px;">335</div>
<div class="t" style="left:1059.00px;top:1751.13px;font-size:24px;line-height:24px;color:#444444;font-weight:700;transform:scaleY(1.13);transform-origin:0 20.32px;">11-30 06:41</div>
<div class="t" style="left:1336.00px;top:1751.13px;font-size:24px;line-height:24px;color:#444444;font-weight:700;transform:scaleY(1.13);transform-origin:0 20.32px;">265</div>
<div class="t" style="left:1605.00px;top:1749.09px;font-size:25px;line-height:25px;color:#e8ae32;font-weight:700;">固定金额模式</div>
<div class="t" style="left:1894.50px;top:1751.13px;font-size:24px;line-height:24px;color:#444444;font-weight:700;letter-spacing:0.2px;transform:scaleY(1.13);transform-origin:0 20.32px;">11-30 01:06:01</div>
<div class="t" style="left:347.50px;top:1822.38px;font-size:24px;line-height:24px;color:#444444;font-weight:700;letter-spacing:0.6px;transform:scaleY(1.13);transform-origin:0 20.32px;">26栋</div>
<div class="t" style="left:517.00px;top:1822.38px;font-size:24px;line-height:24px;color:#444444;font-weight:700;transform:scaleY(1.13);transform-origin:0 20.32px;">2号机 插座1</div>
<div class="t" style="left:798.00px;top:1822.38px;font-size:24px;line-height:24px;color:#e27f4c;font-weight:700;letter-spacing:0.4px;transform:scaleY(1.13);transform-origin:0 20.32px;">352</div>
<div class="t" style="left:1059.00px;top:1822.38px;font-size:24px;line-height:24px;color:#444444;font-weight:700;transform:scaleY(1.13);transform-origin:0 20.32px;">11-30 06:58</div>
<div class="t" style="left:1336.00px;top:1822.38px;font-size:24px;line-height:24px;color:#444444;font-weight:700;transform:scaleY(1.13);transform-origin:0 20.32px;">248</div>
<div class="t" style="left:1605.00px;top:1820.34px;font-size:25px;line-height:25px;color:#e8ae32;font-weight:700;">固定金额模式</div>
<div class="t" style="left:1894.50px;top:1822.38px;font-size:24px;line-height:24px;color:#444444;font-weight:700;letter-spacing:0.2px;transform:scaleY(1.13);transform-origin:0 20.32px;">11-30 01:06:00</div>
<div class="t" style="left:347.50px;top:1893.63px;font-size:24px;line-height:24px;color:#444444;font-weight:700;letter-spacing:0.6px;transform:scaleY(1.13);transform-origin:0 20.32px;">26栋</div>
<div class="t" style="left:517.00px;top:1893.63px;font-size:24px;line-height:24px;color:#444444;font-weight:700;transform:scaleY(1.13);transform-origin:0 20.32px;">1号机 插座7</div>
<div class="t" style="left:798.00px;top:1893.63px;font-size:24px;line-height:24px;color:#e27f4c;font-weight:700;letter-spacing:0.4px;transform:scaleY(1.13);transform-origin:0 20.32px;">380</div>
<div class="t" style="left:1059.00px;top:1893.63px;font-size:24px;line-height:24px;color:#444444;font-weight:700;transform:scaleY(1.13);transform-origin:0 20.32px;">11-30 07:26</div>
<div class="t" style="left:1336.00px;top:1893.63px;font-size:24px;line-height:24px;color:#444444;font-weight:700;transform:scaleY(1.13);transform-origin:0 20.32px;">220</div>
<div class="t" style="left:1605.00px;top:1891.59px;font-size:25px;line-height:25px;color:#e8ae32;font-weight:700;">固定金额模式</div>
<div class="t" style="left:1894.50px;top:1893.63px;font-size:24px;line-height:24px;color:#444444;font-weight:700;letter-spacing:0.2px;transform:scaleY(1.13);transform-origin:0 20.32px;">11-30 01:06:01</div>
<div class="t" style="left:347.50px;top:1964.88px;font-size:24px;line-height:24px;color:#444444;font-weight:700;letter-spacing:0.6px;transform:scaleY(1.13);transform-origin:0 20.32px;">26栋</div>
<div class="t" style="left:517.00px;top:1964.88px;font-size:24px;line-height:24px;color:#444444;font-weight:700;transform:scaleY(1.13);transform-origin:0 20.32px;">3号机 插座10</div>
<div class="t" style="left:798.00px;top:1964.88px;font-size:24px;line-height:24px;color:#e27f4c;font-weight:700;letter-spacing:0.4px;transform:scaleY(1.13);transform-origin:0 20.32px;">393</div>
<div class="t" style="left:1059.00px;top:1964.88px;font-size:24px;line-height:24px;color:#444444;font-weight:700;transform:scaleY(1.13);transform-origin:0 20.32px;">11-30 07:39</div>
<div class="t" style="left:1336.00px;top:1964.88px;font-size:24px;line-height:24px;color:#444444;font-weight:700;transform:scaleY(1.13);transform-origin:0 20.32px;">207</div>
<div class="t" style="left:1605.00px;top:1962.84px;font-size:25px;line-height:25px;color:#e8ae32;font-weight:700;">固定金额模式</div>
<div class="t" style="left:1894.50px;top:1964.88px;font-size:24px;line-height:24px;color:#444444;font-weight:700;letter-spacing:0.2px;transform:scaleY(1.13);transform-origin:0 20.32px;">11-30 01:06:01</div>
</div>
<div style="position:absolute;left:2606px;top:165px;width:823px;height:1830px;border-radius:64px 64px 68px 68px;background:#f4f4f4;overflow:hidden;">
<div style="position:absolute;left:0;top:174.60000000000002px;width:823px;height:1551.1px;background:#fdfcfa;"></div>
<div style="position:absolute;left:0;top:174.60000000000002px;width:823px;height:124.39999999999998px;background:radial-gradient(ellipse 260px 100px at 220px 70px, rgba(238,237,231,0.7), rgba(240,239,233,0)), linear-gradient(90deg,#fcfbf7,#fdfcf5 50%,#fefdf6);border-bottom:1.5px solid #ecebe6;box-sizing:border-box;"></div>
</div>
<div style="position:absolute;left:3427.50px;top:339.60px;width:1.50px;height:263.00px;background:#e0d8cc;"></div>
<div class="t" style="left:2658.60px;top:195.05px;font-size:29px;line-height:29px;color:#333333;font-weight:400;letter-spacing:-0.1px;-webkit-text-stroke:0.8px #333;transform:scaleY(1.07);transform-origin:0 24.55px;">14:46:54</div>
<div class="t" style="left:3160.40px;top:194.48px;font-size:15.5px;line-height:15.5px;color:#333;font-weight:700;letter-spacing:-0.1px;">5.33</div>
<div class="t" style="left:3160.40px;top:208.17px;font-size:13.5px;line-height:13.5px;color:#333;font-weight:700;letter-spacing:-0.4px;">KB/s</div>
<svg style="position:absolute;left:3196px;top:196px" width="24" height="26" viewBox="0 0 24 26"><path d="M6 7.5 L17.5 16.5 L11.5 22 V3 L17.5 8.5 L6 17.5" fill="none" stroke="#2e2e2e" stroke-width="3.4" stroke-linejoin="round" stroke-linecap="round"/><circle cx="2.6" cy="12.5" r="2" fill="#2e2e2e"/><circle cx="21.4" cy="12.5" r="2" fill="#2e2e2e"/></svg>
<svg style="position:absolute;left:3227px;top:196px" width="34" height="24" viewBox="0 0 34 24"><rect x="1" y="17" width="5" height="6" rx="2.5" fill="#2e2e2e"/><rect x="10" y="13" width="5" height="10" rx="2.5" fill="#2e2e2e"/><rect x="19" y="8" width="5" height="15" rx="2.5" fill="#2e2e2e"/><rect x="28" y="1" width="5" height="22" rx="2.5" fill="#2e2e2e"/></svg>
<svg style="position:absolute;left:3269px;top:196px" width="34" height="24" viewBox="0 0 34 24"><rect x="1" y="17" width="5" height="6" rx="2.5" fill="#2e2e2e"/><rect x="10" y="13" width="5" height="10" rx="2.5" fill="#2e2e2e"/><rect x="19" y="8" width="5" height="15" rx="2.5" fill="#2e2e2e"/><rect x="28" y="1" width="5" height="22" rx="2.5" fill="#2e2e2e"/></svg>
<svg style="position:absolute;left:3309px;top:196px" width="36" height="26" viewBox="0 0 36 26"><path d="M2.5 8.5 A18 18 0 0 1 29.5 8.5" fill="none" stroke="#2e2e2e" stroke-width="3.2" stroke-linecap="round"/><path d="M8 14 A10.5 10.5 0 0 1 24 14" fill="none" stroke="#2e2e2e" stroke-width="3.2" stroke-linecap="round"/><circle cx="16" cy="21" r="2.8" fill="#2e2e2e"/><text x="27" y="25" font-size="9" font-weight="700" fill="#2e2e2e" font-family="Liberation Sans">6</text></svg>
<div class="t" style="left:3348.60px;top:194.20px;font-size:30px;line-height:30px;color:#2e2e2e;font-weight:700;">42</div>
<div style="position:absolute;left:2631px;top:256px;width:62px;height:62px;border-radius:50%;background:#f3f3f3;box-shadow:0 0 0 1px #efefef;"></div>
<svg style="position:absolute;left:2631px;top:256px" width="62" height="62" viewBox="0 0 62 62"><g transform="translate(32,29) scale(0.79)"><path d="M-26 12 C-24 7 -12 8 -4 9 C6 8 18 7 27 11 C29 15 22 19 10 19 C0 20 -10 19 -20 18 C-26 17 -28 15 -26 12 Z" fill="#90c6ef"/><path d="M-20 14 C-10 15 0 16 12 15 M-4 18 C4 18 10 17 16 17" fill="none" stroke="#6aaae0" stroke-width="1.6" stroke-linecap="round"/><path d="M-14.5 8 L-14.5 -6 L1 -11.6 L11 -6 L18.5 -6 L18.5 8 Z" fill="#ffffff"/><path d="M-14.5 9 L-14.5 -6 L1 -11.6 L11 -6 L18.5 -6 L18.5 9" fill="none" stroke="#5b5b5b" stroke-width="1.5" stroke-linejoin="round" stroke-linecap="round"/><path d="M-11 0 L-7 7" stroke="#666" stroke-width="1.3"/><circle cx="0.3" cy="2.9" r="1.8" fill="#555"/><path d="M7 6 L9 3" stroke="#777" stroke-width="1.2"/><path d="M-15 8 L-15 -12" stroke="#6d6d66" stroke-width="1.7"/><ellipse cx="-13.5" cy="-14" rx="2.8" ry="3.6" fill="#d8d3a0" stroke="#777" stroke-width="1.1"/><ellipse cx="-21.5" cy="-5" rx="2.6" ry="3.6" transform="rotate(-35 -21.5 -5)" fill="#5c9ad6"/><circle cx="-24.5" cy="-13" r="1.3" fill="#6fa7d8"/></g></svg>
<div style="position:absolute;left:2718.70px;top:251.30px;width:614.30px;height:71.00px;box-sizing:border-box;border:2px solid #c9c9c9;border-radius:36px;background:#fdfdfd;"></div>
<svg style="position:absolute;left:2746px;top:268px" width="36" height="40" viewBox="0 0 36 40"><path d="M10.5 11.4 V9.8 A5.8 6.2 0 0 1 22.1 9.8 V11.4" fill="none" stroke="#5f5f5f" stroke-width="2.3"/><path d="M14.5 34.2 H7.2 A4.5 4.5 0 0 1 2.7 29.7 V15.9 A4.5 4.5 0 0 1 7.2 11.4 H25.5 A4.5 4.5 0 0 1 30 15.9 V17.5" fill="none" stroke="#5a5a5a" stroke-width="2.4" stroke-linejoin="round" stroke-linecap="round"/><path d="M24.4 17.2 L32.8 20.6 V28 C32.8 32.4 29 35.6 24.4 37.2 C19.8 35.6 16 32.4 16 28 V20.6 Z" fill="#2f6ae0"/></svg>
<div class="t" style="left:2791.50px;top:274.05px;font-size:29px;line-height:29px;color:#262626;font-weight:400;">www.do1e.cn/charge.html?filter=26栋</div>
<svg style="position:absolute;left:3362px;top:266px" width="40" height="40" viewBox="0 0 40 40"><path d="M36.15 17.93 A16.5 16.5 0 1 1 30.5 8.16" fill="none" stroke="#222" stroke-width="3.1" stroke-linecap="round"/><path d="M33.6 4.6 V11.9 H27.2" fill="none" stroke="#222" stroke-width="3.2" stroke-linecap="round" stroke-linejoin="round"/></svg>
<div style="position:absolute;left:2633px;top:366px;width:72px;height:72px;border-radius:50%;background:#ffffff;box-sizing:border-box;border:2px solid #ebebe8;"></div>
<svg style="position:absolute;left:2657px;top:391px" width="24" height="22" viewBox="0 0 24 22"><path d="M3 3.5 H21 M3 11 H21 M3 18.5 H21" stroke="#222" stroke-width="2.2"/></svg>
<div style="position:absolute;left:3304px;top:366px;width:72px;height:72px;border-radius:50%;background:#ffffff;box-sizing:border-box;border:2px solid #ebebe8;"></div>
<svg style="position:absolute;left:3326px;top:388px" width="30" height="30" viewBox="0 0 30 30"><circle cx="12.8" cy="8" r="5.2" fill="none" stroke="#111" stroke-width="2.2"/><path d="M13.3 17.7 H8.5 C5 17.7 2.7 20 2.7 22.5 C2.7 24 3.8 24.7 5.5 24.7 H17.8" fill="none" stroke="#111" stroke-width="2.2" stroke-linecap="round"/><path d="M17.5 17.8 H25 M19.8 15.2 L17.3 17.8 L19.8 20.4" fill="none" stroke="#111" stroke-width="2.2" stroke-linecap="round" stroke-linejoin="round"/></svg>
<div class="t" style="left:2734.00px;top:366.38px;font-size:22px;line-height:22px;color:#9c9c9c;font-weight:400;letter-spacing:1px;">每分钟更新</div>
<div class="t" style="left:2735.00px;top:403.07px;font-size:33px;line-height:33px;color:#141414;font-weight:400;letter-spacing:0.5px;-webkit-text-stroke:0.45px #141414;">南大仙林充电桩状态</div>
<div class="t" style="left:2650.00px;top:508.45px;font-size:29px;line-height:29px;color:#333;font-weight:400;letter-spacing:0.5px;">选择站点:</div>
<div style="position:absolute;left:2799.00px;top:489.00px;width:179.60px;height:68.70px;box-sizing:border-box;border:2.5px solid #e08b5d;border-radius:14px;background:#efeeee;"></div>
<div class="t" style="left:2821.40px;top:507.45px;font-size:29px;line-height:29px;color:#2e2e2e;font-weight:400;">26栋</div>
<svg style="position:absolute;left:2946px;top:512px" width="26" height="20" viewBox="0 0 26 20"><path d="M4 5 L13 14 L22 5" fill="none" stroke="#444" stroke-width="1.8" stroke-linecap="round" stroke-linejoin="round"/></svg>
<div style="position:absolute;left:0;top:0;width:3389.3px;height:1890px;overflow:hidden;">
<div style="position:absolute;left:2648.00px;top:576.00px;width:2.00px;height:1315.00px;background:#161616;"></div>
<div style="position:absolute;left:2755.00px;top:576.00px;width:2.00px;height:1315.00px;background:#161616;"></div>
<div style="position:absolute;left:2846.00px;top:576.00px;width:2.00px;height:1315.00px;background:#161616;"></div>
<div style="position:absolute;left:3009.00px;top:576.00px;width:2.00px;height:1315.00px;background:#161616;"></div>
<div style="position:absolute;left:3183.00px;top:576.00px;width:2.00px;height:1315.00px;background:#161616;"></div>
<div style="position:absolute;left:3352.00px;top:576.00px;width:2.00px;height:1315.00px;background:#161616;"></div>
<div style="position:absolute;left:2648.00px;top:576.00px;width:742.00px;height:2.00px;background:#161616;"></div>
<div style="position:absolute;left:2648.00px;top:638.00px;width:742.00px;height:2.00px;background:#161616;"></div>
<div style="position:absolute;left:2648.00px;top:776.00px;width:742.00px;height:2.00px;background:#161616;"></div>
<div style="position:absolute;left:2648.00px;top:915.00px;width:742.00px;height:2.00px;background:#161616;"></div>
<div style="position:absolute;left:2648.00px;top:1054.00px;width:742.00px;height:2.00px;background:#161616;"></div>
<div style="position:absolute;left:2648.00px;top:1193.00px;width:742.00px;height:2.00px;background:#161616;"></div>
<div style="position:absolute;left:2648.00px;top:1332.00px;width:742.00px;height:2.00px;background:#161616;"></div>
<div style="position:absolute;left:2648.00px;top:1471.00px;width:742.00px;height:2.00px;background:#161616;"></div>
<div style="position:absolute;left:2648.00px;top:1610.00px;width:742.00px;height:2.00px;background:#161616;"></div>
<div style="position:absolute;left:2648.00px;top:1749.00px;width:742.00px;height:2.00px;background:#161616;"></div>
<div style="position:absolute;left:2648.00px;top:1888.00px;width:742.00px;height:2.00px;background:#161616;"></div>
<div class="t" style="left:2667.30px;top:596.88px;font-size:22px;line-height:22px;color:#141414;font-weight:700;letter-spacing:-0.3px;transform:scaleY(1.07);transform-origin:0 18.62px;">Station</div>
<div class="t" style="left:2773.80px;top:596.88px;font-size:22px;line-height:22px;color:#141414;font-weight:700;letter-spacing:-0.3px;transform:scaleY(1.07);transform-origin:0 18.62px;">Name</div>
<div class="t" style="left:2864.70px;top:596.88px;font-size:22px;line-height:22px;color:#141414;font-weight:700;letter-spacing:-0.3px;transform:scaleY(1.07);transform-origin:0 18.62px;">Rest Minutes</div>
<div class="t" style="left:3028.00px;top:596.88px;font-size:22px;line-height:22px;color:#141414;font-weight:700;letter-spacing:-0.3px;transform:scaleY(1.07);transform-origin:0 18.62px;">Available Time</div>
<div class="t" style="left:3202.00px;top:596.88px;font-size:22px;line-height:22px;color:#141414;font-weight:700;letter-spacing:-0.3px;transform:scaleY(1.07);transform-origin:0 18.62px;">Used Minutes</div>
<div class="t" style="left:3371.40px;top:596.88px;font-size:22px;line-height:22px;color:#141414;font-weight:700;letter-spacing:-0.3px;transform:scaleY(1.07);transform-origin:0 18.62px;">Message</div>
<div class="t" style="left:2667.30px;top:698.01px;font-size:23px;line-height:23px;color:#444444;font-weight:700;transform:scaleY(1.12);transform-origin:0 19.47px;">26栋</div>
<div class="t" style="left:2773.80px;top:663.01px;font-size:23px;line-height:23px;color:#444444;font-weight:700;transform:scaleY(1.12);transform-origin:0 19.47px;">3号</div>
<div class="t" style="left:2773.80px;top:698.01px;font-size:23px;line-height:23px;color:#444444;font-weight:700;transform:scaleY(1.12);transform-origin:0 19.47px;">机 插</div>
<div class="t" style="left:2773.80px;top:733.01px;font-size:23px;line-height:23px;color:#444444;font-weight:700;transform:scaleY(1.12);transform-origin:0 19.47px;">座6</div>
<div class="t" style="left:2864.70px;top:698.01px;font-size:23px;line-height:23px;color:#4391e0;font-weight:700;transform:scaleY(1.12);transform-origin:0 19.47px;">0</div>
<div class="t" style="left:3028.00px;top:698.01px;font-size:23px;line-height:23px;color:#444444;font-weight:700;transform:scaleY(1.12);transform-origin:0 19.47px;">now</div>
<div class="t" style="left:3202.00px;top:698.01px;font-size:23px;line-height:23px;color:#444444;font-weight:700;transform:scaleY(1.12);transform-origin:0 19.47px;">0</div>
<div class="t" style="left:3371.40px;top:697.16px;font-size:24px;line-height:24px;color:#4391e0;font-weight:700;">空闲</div>
<div class="t" style="left:2667.30px;top:836.96px;font-size:23px;line-height:23px;color:#444444;font-weight:700;transform:scaleY(1.12);transform-origin:0 19.47px;">26栋</div>
<div class="t" style="left:2773.80px;top:801.96px;font-size:23px;line-height:23px;color:#444444;font-weight:700;transform:scaleY(1.12);transform-origin:0 19.47px;">2号</div>
<div class="t" style="left:2773.80px;top:836.96px;font-size:23px;line-height:23px;color:#444444;font-weight:700;transform:scaleY(1.12);transform-origin:0 19.47px;">机 插</div>
<div class="t" style="left:2773.80px;top:871.96px;font-size:23px;line-height:23px;color:#444444;font-weight:700;transform:scaleY(1.12);transform-origin:0 19.47px;">座7</div>
<div class="t" style="left:2864.70px;top:836.96px;font-size:23px;line-height:23px;color:#e8b24a;font-weight:700;transform:scaleY(1.12);transform-origin:0 19.47px;">35</div>
<div class="t" style="left:3028.00px;top:836.96px;font-size:23px;line-height:23px;color:#444444;font-weight:700;transform:scaleY(1.12);transform-origin:0 19.47px;">11-29 15:21</div>
<div class="t" style="left:3202.00px;top:836.96px;font-size:23px;line-height:23px;color:#444444;font-weight:700;transform:scaleY(1.12);transform-origin:0 19.47px;">265</div>
<div class="t" style="left:3371.40px;top:818.81px;font-size:24px;line-height:24px;color:#e8ae32;font-weight:700;">固定金</div>
<div class="t" style="left:3371.40px;top:853.41px;font-size:24px;line-height:24px;color:#e8ae32;font-weight:700;">额模式</div>
<div class="t" style="left:2667.30px;top:975.91px;font-size:23px;line-height:23px;color:#444444;font-weight:700;transform:scaleY(1.12);transform-origin:0 19.47px;">26栋</div>
<div class="t" style="left:2773.80px;top:940.91px;font-size:23px;line-height:23px;color:#444444;font-weight:700;transform:scaleY(1.12);transform-origin:0 19.47px;">3号</div>
<div class="t" style="left:2773.80px;top:975.91px;font-size:23px;line-height:23px;color:#444444;font-weight:700;transform:scaleY(1.12);transform-origin:0 19.47px;">机 插</div>
<div class="t" style="left:2773.80px;top:1010.91px;font-size:23px;line-height:23px;color:#444444;font-weight:700;transform:scaleY(1.12);transform-origin:0 19.47px;">座1</div>
<div class="t" style="left:2864.70px;top:975.91px;font-size:23px;line-height:23px;color:#e8b24a;font-weight:700;transform:scaleY(1.12);transform-origin:0 19.47px;">54</div>
<div class="t" style="left:3028.00px;top:975.91px;font-size:23px;line-height:23px;color:#444444;font-weight:700;transform:scaleY(1.12);transform-origin:0 19.47px;">11-29 15:40</div>
<div class="t" style="left:3202.00px;top:975.91px;font-size:23px;line-height:23px;color:#444444;font-weight:700;transform:scaleY(1.12);transform-origin:0 19.47px;">546</div>
<div class="t" style="left:3371.40px;top:957.76px;font-size:24px;line-height:24px;color:#e8ae32;font-weight:700;">固定金</div>
<div class="t" style="left:3371.40px;top:992.36px;font-size:24px;line-height:24px;color:#e8ae32;font-weight:700;">额模式</div>
<div class="t" style="left:2667.30px;top:1114.86px;font-size:23px;line-height:23px;color:#444444;font-weight:700;transform:scaleY(1.12);transform-origin:0 19.47px;">26栋</div>
<div class="t" style="left:2773.80px;top:1079.86px;font-size:23px;line-height:23px;color:#444444;font-weight:700;transform:scaleY(1.12);transform-origin:0 19.47px;">1号</div>
<div class="t" style="left:2773.80px;top:1114.86px;font-size:23px;line-height:23px;color:#444444;font-weight:700;transform:scaleY(1.12);transform-origin:0 19.47px;">机 插</div>
<div class="t" style="left:2773.80px;top:1149.86px;font-size:23px;line-height:23px;color:#444444;font-weight:700;transform:scaleY(1.12);transform-origin:0 19.47px;">座7</div>
<div class="t" style="left:2864.70px;top:1114.86px;font-size:23px;line-height:23px;color:#e27f4c;font-weight:700;transform:scaleY(1.12);transform-origin:0 19.47px;">180</div>
<div class="t" style="left:3028.00px;top:1114.86px;font-size:23px;line-height:23px;color:#444444;font-weight:700;transform:scaleY(1.12);transform-origin:0 19.47px;">11-29 17:46</div>
<div class="t" style="left:3202.00px;top:1114.86px;font-size:23px;line-height:23px;color:#444444;font-weight:700;transform:scaleY(1.12);transform-origin:0 19.47px;">180</div>
<div class="t" style="left:3371.40px;top:1096.71px;font-size:24px;line-height:24px;color:#e8ae32;font-weight:700;">固定金</div>
<div class="t" style="left:3371.40px;top:1131.31px;font-size:24px;line-height:24px;color:#e8ae32;font-weight:700;">额模式</div>
<div class="t" style="left:2667.30px;top:1253.81px;font-size:23px;line-height:23px;color:#444444;font-weight:700;transform:scaleY(1.12);transform-origin:0 19.47px;">26栋</div>
<div class="t" style="left:2773.80px;top:1218.81px;font-size:23px;line-height:23px;color:#444444;font-weight:700;transform:scaleY(1.12);transform-origin:0 19.47px;">1号</div>
<div class="t" style="left:2773.80px;top:1253.81px;font-size:23px;line-height:23px;color:#444444;font-weight:700;transform:scaleY(1.12);transform-origin:0 19.47px;">机 插</div>
<div class="t" style="left:2773.80px;top:1288.81px;font-size:23px;line-height:23px;color:#444444;font-weight:700;transform:scaleY(1.12);transform-origin:0 19.47px;">座5</div>
<div class="t" style="left:2864.70px;top:1253.81px;font-size:23px;line-height:23px;color:#e27f4c;font-weight:700;transform:scaleY(1.12);transform-origin:0 19.47px;">225</div>
<div class="t" style="left:3028.00px;top:1253.81px;font-size:23px;line-height:23px;color:#444444;font-weight:700;transform:scaleY(1.12);transform-origin:0 19.47px;">11-29 18:31</div>
<div class="t" style="left:3202.00px;top:1253.81px;font-size:23px;line-height:23px;color:#444444;font-weight:700;transform:scaleY(1.12);transform-origin:0 19.47px;">375</div>
<div class="t" style="left:3371.40px;top:1235.66px;font-size:24px;line-height:24px;color:#e8ae32;font-weight:700;">固定金</div>
<div class="t" style="left:3371.40px;top:1270.26px;font-size:24px;line-height:24px;color:#e8ae32;font-weight:700;">额模式</div>
<div class="t" style="left:2667.30px;top:1392.76px;font-size:23px;line-height:23px;color:#444444;font-weight:700;transform:scaleY(1.12);transform-origin:0 19.47px;">26栋</div>
<div class="t" style="left:2773.80px;top:1357.76px;font-size:23px;line-height:23px;color:#444444;font-weight:700;transform:scaleY(1.12);transform-origin:0 19.47px;">2号</div>
<div class="t" style="left:2773.80px;top:1392.76px;font-size:23px;line-height:23px;color:#444444;font-weight:700;transform:scaleY(1.12);transform-origin:0 19.47px;">机 插</div>
<div class="t" style="left:2773.80px;top:1427.76px;font-size:23px;line-height:23px;color:#444444;font-weight:700;transform:scaleY(1.12);transform-origin:0 19.47px;">座4</div>
<div class="t" style="left:2864.70px;top:1392.76px;font-size:23px;line-height:23px;color:#e27f4c;font-weight:700;transform:scaleY(1.12);transform-origin:0 19.47px;">243</div>
<div class="t" style="left:3028.00px;top:1392.76px;font-size:23px;line-height:23px;color:#444444;font-weight:700;transform:scaleY(1.12);transform-origin:0 19.47px;">11-29 18:49</div>
<div class="t" style="left:3202.00px;top:1392.76px;font-size:23px;line-height:23px;color:#444444;font-weight:700;transform:scaleY(1.12);transform-origin:0 19.47px;">57</div>
<div class="t" style="left:3371.40px;top:1374.61px;font-size:24px;line-height:24px;color:#e8ae32;font-weight:700;">固定金</div>
<div class="t" style="left:3371.40px;top:1409.21px;font-size:24px;line-height:24px;color:#e8ae32;font-weight:700;">额模式</div>
<div class="t" style="left:2667.30px;top:1531.71px;font-size:23px;line-height:23px;color:#444444;font-weight:700;transform:scaleY(1.12);transform-origin:0 19.47px;">26栋</div>
<div class="t" style="left:2773.80px;top:1496.71px;font-size:23px;line-height:23px;color:#444444;font-weight:700;transform:scaleY(1.12);transform-origin:0 19.47px;">2号</div>
<div class="t" style="left:2773.80px;top:1531.71px;font-size:23px;line-height:23px;color:#444444;font-weight:700;transform:scaleY(1.12);transform-origin:0 19.47px;">机 插</div>
<div class="t" style="left:2773.80px;top:1566.71px;font-size:23px;line-height:23px;color:#444444;font-weight:700;transform:scaleY(1.12);transform-origin:0 19.47px;">座10</div>
<div class="t" style="left:2864.70px;top:1531.71px;font-size:23px;line-height:23px;color:#e27f4c;font-weight:700;transform:scaleY(1.12);transform-origin:0 19.47px;">270</div>
<div class="t" style="left:3028.00px;top:1531.71px;font-size:23px;line-height:23px;color:#444444;font-weight:700;transform:scaleY(1.12);transform-origin:0 19.47px;">11-29 19:16</div>
<div class="t" style="left:3202.00px;top:1531.71px;font-size:23px;line-height:23px;color:#444444;font-weight:700;transform:scaleY(1.12);transform-origin:0 19.47px;">330</div>
<div class="t" style="left:3371.40px;top:1513.56px;font-size:24px;line-height:24px;color:#e8ae32;font-weight:700;">固定金</div>
<div class="t" style="left:3371.40px;top:1548.16px;font-size:24px;line-height:24px;color:#e8ae32;font-weight:700;">额模式</div>
<div class="t" style="left:2667.30px;top:1670.66px;font-size:23px;line-height:23px;color:#444444;font-weight:700;transform:scaleY(1.12);transform-origin:0 19.47px;">26栋</div>
<div class="t" style="left:2773.80px;top:1635.66px;font-size:23px;line-height:23px;color:#444444;font-weight:700;transform:scaleY(1.12);transform-origin:0 19.47px;">3号</div>
<div class="t" style="left:2773.80px;top:1670.66px;font-size:23px;line-height:23px;color:#444444;font-weight:700;transform:scaleY(1.12);transform-origin:0 19.47px;">机 插</div>
<div class="t" style="left:2773.80px;top:1705.66px;font-size:23px;line-height:23px;color:#444444;font-weight:700;transform:scaleY(1.12);transform-origin:0 19.47px;">座7</div>
<div class="t" style="left:2864.70px;top:1670.66px;font-size:23px;line-height:23px;color:#e27f4c;font-weight:700;transform:scaleY(1.12);transform-origin:0 19.47px;">270</div>
<div class="t" style="left:3028.00px;top:1670.66px;font-size:23px;line-height:23px;color:#444444;font-weight:700;transform:scaleY(1.12);transform-origin:0 19.47px;">11-29 19:16</div>
<div class="t" style="left:3202.00px;top:1670.66px;font-size:23px;line-height:23px;color:#444444;font-weight:700;transform:scaleY(1.12);transform-origin:0 19.47px;">330</div>
<div class="t" style="left:3371.40px;top:1652.51px;font-size:24px;line-height:24px;color:#e8ae32;font-weight:700;">固定金</div>
<div class="t" style="left:3371.40px;top:1687.11px;font-size:24px;line-height:24px;color:#e8ae32;font-weight:700;">额模式</div>
<div class="t" style="left:2667.30px;top:1809.61px;font-size:23px;line-height:23px;color:#444444;font-weight:700;transform:scaleY(1.12);transform-origin:0 19.47px;">26栋</div>
<div class="t" style="left:2773.80px;top:1774.61px;font-size:23px;line-height:23px;color:#444444;font-weight:700;transform:scaleY(1.12);transform-origin:0 19.47px;">3号</div>
<div class="t" style="left:2773.80px;top:1809.61px;font-size:23px;line-height:23px;color:#444444;font-weight:700;transform:scaleY(1.12);transform-origin:0 19.47px;">机 插</div>
<div class="t" style="left:2773.80px;top:1844.61px;font-size:23px;line-height:23px;color:#444444;font-weight:700;transform:scaleY(1.12);transform-origin:0 19.47px;">座10</div>
<div class="t" style="left:2864.70px;top:1809.61px;font-size:23px;line-height:23px;color:#e27f4c;font-weight:700;transform:scaleY(1.12);transform-origin:0 19.47px;">279</div>
<div class="t" style="left:3028.00px;top:1809.61px;font-size:23px;line-height:23px;color:#444444;font-weight:700;transform:scaleY(1.12);transform-origin:0 19.47px;">11-29 19:25</div>
<div class="t" style="left:3202.00px;top:1809.61px;font-size:23px;line-height:23px;color:#444444;font-weight:700;transform:scaleY(1.12);transform-origin:0 19.47px;">321</div>
<div class="t" style="left:3371.40px;top:1791.46px;font-size:24px;line-height:24px;color:#e8ae32;font-weight:700;">固定金</div>
<div class="t" style="left:3371.40px;top:1826.06px;font-size:24px;line-height:24px;color:#e8ae32;font-weight:700;">额模式</div>
</div>
<svg style="position:absolute;left:2670px;top:1926px" width="38" height="34" viewBox="0 0 38 34"><path d="M34 17 H5 M17 4 L4 17 L17 30" fill="none" stroke="#222" stroke-width="3" stroke-linecap="round" stroke-linejoin="round"/></svg>
<svg style="position:absolute;left:2832px;top:1926px" width="42" height="34" viewBox="0 0 42 34"><path d="M4 17 H37 M24 4 L37 17 L24 30" fill="none" stroke="#bdbdbd" stroke-width="3" stroke-linecap="round" stroke-linejoin="round"/></svg>
<svg style="position:absolute;left:2998px;top:1924px" width="40" height="40" viewBox="0 0 40 40"><path d="M19.5 3 V36 M3 19.5 H36" stroke="#222" stroke-width="3" stroke-linecap="round"/></svg>
<svg style="position:absolute;left:3163px;top:1924px" width="40" height="40" viewBox="0 0 40 40"><rect x="3.5" y="3.5" width="33" height="33" rx="5" fill="none" stroke="#222" stroke-width="3"/><path d="M17 15 L21 12 V29" fill="none" stroke="#222" stroke-width="2"/></svg>
<svg style="position:absolute;left:3306px;top:1926px" width="46" height="34" viewBox="0 0 46 34"><path d="M3 4 H43 M3 17 H43 M3 30 H43" stroke="#222" stroke-width="3" stroke-linecap="round"/></svg>
</body></html>
